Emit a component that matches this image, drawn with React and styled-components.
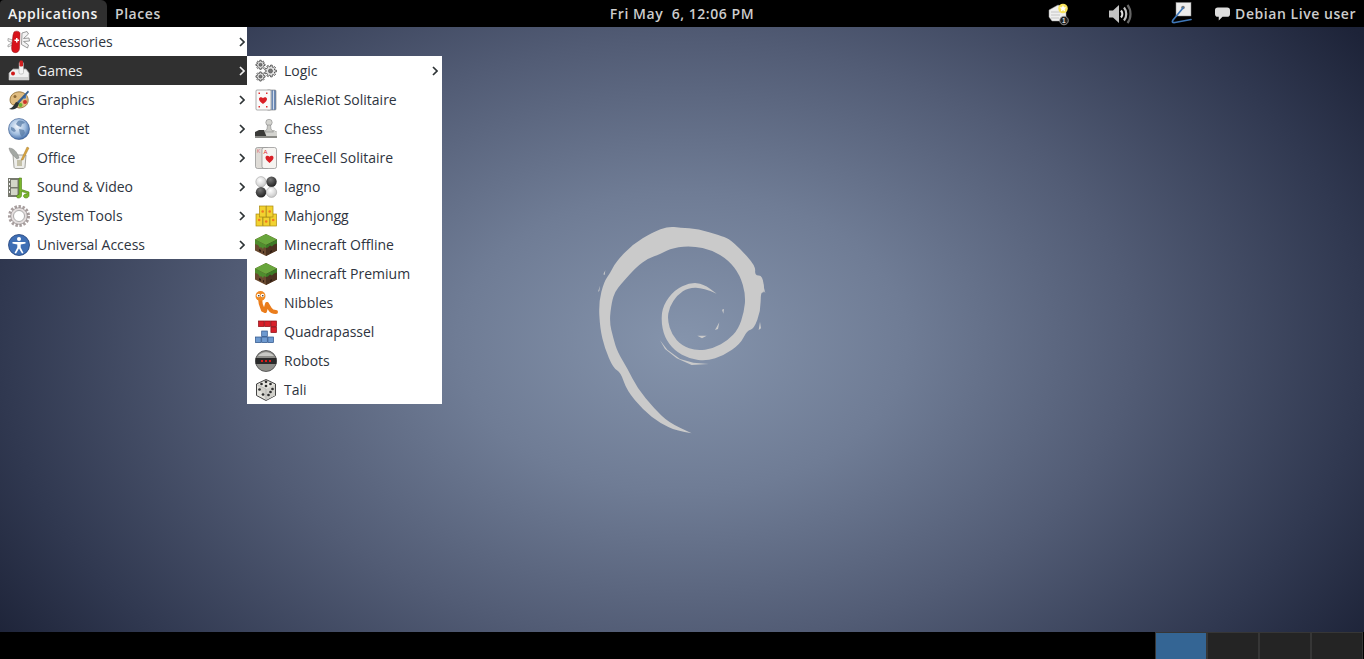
import styled, { createGlobalStyle } from "styled-components"

const GlobalStyle = createGlobalStyle`
  html, body { margin: 0; height: 100%; background: #000; overflow: hidden; }
  #root { height: 100%; }
`

const Icon = ({ children }) => <IconBox viewBox="0 0 22 22">{children}</IconBox>

const gearPoints = (r, teeth) => {
  const pts = []
  const step = (Math.PI * 2) / teeth
  for (let i = 0; i < teeth; i++) {
    const a = i * step
    const corners = [[0.72, -0.32], [1, -0.2], [1, 0.2], [0.72, 0.32]]
    corners.forEach(([k, d]) => {
      const t = a + d * step
      pts.push(`${(Math.cos(t) * r * k).toFixed(2)},${(Math.sin(t) * r * k).toFixed(2)}`)
    })
  }
  return pts.join(" ")
}

const Gear = ({ x, y, r, teeth = 8 }) => (
  <g transform={`translate(${x} ${y})`}>
    <polygon points={gearPoints(r, teeth)} fill="#e2e2e2" stroke="#4e4e4e" strokeWidth="0.9" strokeLinejoin="round" />
    <circle r={r * 0.34} fill="#777" stroke="#444" strokeWidth="0.6" />
  </g>
)

const Cube = () => (
  <Icon>
    <path d="M11 0 22 5.500v11L11 22 0 16.500v-11z" fill="#6a4a30" />
    <path d="M11 11 22 5.500v11L11 22z" fill="#4b3220" />
    <path d="M11 0 22 5.500 11 11 0 5.500z" fill="#68a63c" />
    <path d="M0 5.500 11 11v3l-2-1-1 2-2-2-1 1-2-3-3-1z" fill="#4f8d2e" />
    <path d="M11 11 22 5.500v4l-3 1-2 2-2-1-2 2-2 .5z" fill="#3d7a26" />
    <path d="M4 15l2 1v2l-2-1zM8 17l1 .5v2L8 19zM15 17l2-1v2l-2 1z" fill="#2e1c10" />
  </Icon>
)

const AccessoriesIcon = () => (
  <Icon>
    <path d="M14 2l5-1.500 1.500 2.500-5 4.500 5.500-.5.5 3-6 .5 5 3.500-1 3-6-3.500z" fill="#f4f4f4" stroke="#909090" strokeWidth="0.9" />
    <path d="M4.500 9 0 7.500 0 10l4 1.500M4.500 14 0 16v-2l4-2" fill="#f4f4f4" stroke="#909090" strokeWidth="0.7" />
    <path d="M6 1c2-1.500 6-1 6 1.500l-.5 15c-.3 4-4 5-6.500 3.500-1.400-1-1.600-4-1.200-6.500L5 4z" fill="#d8131b" stroke="#8e0b10" strokeWidth="0.5" />
    <path d="M6.500 8.500h1.500V7h1.500v1.500H11V10H9.500v1.500H8V10H6.500z" fill="#fff" />
  </Icon>
)

const GamesIcon = () => (
  <Icon>
    <path d="M1 13 5 9h13l3 4v7H1z" fill="#f0f0f0" stroke="#a0a0a0" strokeWidth="0.8" />
    <path d="M1 17h20v3H1z" fill="#cfcfcf" />
    <rect x="11" y="2" width="4.500" height="12" rx="1.500" fill="#f5f5f5" stroke="#999" strokeWidth="0.5" />
    <rect x="11.500" y="0.500" width="3.500" height="6" rx="1.200" fill="#cf1f1f" />
    <circle cx="5" cy="13.500" r="2" fill="#d01818" />
  </Icon>
)

const GraphicsIcon = () => (
  <Icon>
    <path d="M2 11C2 5 8 2 13 3c5 1 8 5 7 10-1 4-5 6-9 6-3 0-2-3-5-3-2 0-4-2-4-5z" fill="#e0bc80" stroke="#8c6a30" strokeWidth="0.8" />
    <circle cx="7" cy="7.500" r="1.500" fill="#8d6a36" />
    <circle cx="12.500" cy="16" r="2" fill="#68b52f" />
    <circle cx="17" cy="13" r="2" fill="#d0332b" />
    <circle cx="16.500" cy="8" r="1.700" fill="#3f78c4" />
    <path d="M20 1.500 9 13l2 1.500L21 3z" fill="#38618f" />
    <path d="M9 13c-2 0-2 2-3 3-1 2-3 3-5 4 4 1 8 0 9-3 .6-1.500 1-2.500 1-3z" fill="#2e3436" />
  </Icon>
)

const InternetIcon = () => (
  <Icon>
    <defs>
      <radialGradient id="globe" cx="42%" cy="38%" r="68%">
        <stop offset="0" stopColor="#f2f6fc" />
        <stop offset="0.55" stopColor="#a3bfe0" />
        <stop offset="1" stopColor="#34609f" />
      </radialGradient>
    </defs>
    <circle cx="11" cy="11" r="10.500" fill="url(#globe)" stroke="#34568a" strokeWidth="0.6" />
    <path d="M10 3c3-1 6 0 7 2l-3 1-1 3-3-1-2-2zM11 11l5 1 1 3-3 4-2-3zM3 9l3 1 2 3-2 1-3-2z" fill="#5a7ca6" opacity="0.75" />
  </Icon>
)

const OfficeIcon = () => (
  <Icon>
    <path d="M5 8h13l-1 12c0 1-1 1.500-2 1.500H8c-1 0-2-.5-2-1.500z" fill="#ededea" stroke="#8d8d85" strokeWidth="0.8" />
    <rect x="9" y="13" width="5" height="6" fill="#c4c0a8" />
    <path d="M1 1c4 0 8 3 10 10L9 12C6 9 2 7 1 1z" fill="#a4a8a4" stroke="#777" strokeWidth="0.4" />
    <path d="M19 0l2 1-6 12h-2z" fill="#d9a441" stroke="#99711f" strokeWidth="0.4" />
  </Icon>
)

const SoundIcon = () => (
  <Icon>
    <path d="M0 2h12v19H0z" fill="#77796f" />
    <path d="M3 4h6.500v7H3zM3 12.500h6.500V19H3z" fill="#d3d6c8" />
    <path d="M1 3h1v2H1zM1 7h1v2H1zM1 11h1v2H1zM1 15h1v2H1z" fill="#eee" />
    <path d="M11 2h2.500v11.500l7.500 2.500v3.500c0 1.500-1.500 2.500-3 2.500s-2.500-1-2.500-2 1-2 2.500-2c.4 0 .6 0 1 .1v-1l-5.500-1.600v4c0 1.500-1.500 2.500-3 2.500-1.200 0-2-.7-2-1.500s1-2 2.500-2z" fill="#7ab62c" stroke="#4c7d12" strokeWidth="0.6" />
  </Icon>
)

const SystemIcon = () => (
  <Icon>
    <circle cx="11" cy="11" r="9.500" fill="none" stroke="#a89e9e" strokeWidth="3" strokeDasharray="2.400 1.600" />
    <circle cx="11" cy="11" r="8.300" fill="#e4dede" stroke="#8e8888" strokeWidth="0.7" />
    <circle cx="11" cy="11" r="5.500" fill="#fff" stroke="#999" strokeWidth="0.8" />
  </Icon>
)

const AccessIcon = () => (
  <Icon>
    <circle cx="11" cy="11" r="10.500" fill="#3f6fb5" stroke="#1f3f78" strokeWidth="0.8" />
    <circle cx="11" cy="5" r="2" fill="#fff" />
    <path d="M4.500 8h13v1.500l-4.800 1v3l2.800 5.500-1.500.6L11 14.500 8 19.600 6.500 19l2.800-5.500v-3l-4.800-1z" fill="#fff" />
  </Icon>
)

const LogicIcon = () => (
  <Icon>
    <Gear x={5.500} y={4.800} r={4.600} />
    <Gear x={5.500} y={16.500} r={4.600} />
    <Gear x={15.500} y={11} r={6} teeth={9} />
  </Icon>
)

const Pips = () => (
  <path d="M3.500 3.500h1.500V5H3.500zM11 3.500h1.500V5H11zM3.500 17h1.500v1.500H3.500zM11 17h1.500v1.500H11z" fill="#e03030" />
)

const AisleIcon = () => (
  <Icon>
    <rect x="12" y="1" width="9" height="20" rx="1" fill="#6b89b6" stroke="#777" strokeWidth="0.6" />
    <path d="M16 1.500v19M18.500 1.500v19" stroke="#dde4ee" strokeWidth="0.9" />
    <rect x="1" y="1" width="15" height="20" rx="1" fill="#fafafa" stroke="#8a8a8a" strokeWidth="0.7" />
    <Pips />
    <path d="M8 15C5 12.500 4 11.500 4 10c0-2 3-2.500 4-.7C9 7.500 12 8 12 10c0 1.500-1 2.500-4 5z" fill="#d91f26" />
  </Icon>
)

const ChessIcon = () => (
  <Icon>
    <path d="M0 14 4 12h14l4 2v6H0z" fill="#3a3a38" />
    <path d="M9 12h9l4 2v6H12z" fill="#d4d4d0" />
    <path d="M0 18h22v2H0z" fill="#8a8a86" />
    <circle cx="14" cy="4.500" r="3.200" fill="#d4d4d0" stroke="#888" strokeWidth="0.6" />
    <path d="M12.500 7h3l.5 4 2.500 3h-9l2.500-3z" fill="#c9c9c5" stroke="#888" strokeWidth="0.6" />
  </Icon>
)

const FreeCellIcon = () => (
  <Icon>
    <rect x="0.500" y="0.500" width="13" height="21" rx="2" fill="#dfdcd7" stroke="#8b8b8b" strokeWidth="0.7" />
    <rect x="7" y="0.500" width="14.500" height="21" rx="2" fill="#f6f4f1" stroke="#8b8b8b" strokeWidth="0.7" />
    <text x="1.800" y="6" fontSize="5.500" fontFamily="Liberation Sans" fill="#d77">K</text>
    <text x="8.500" y="6.500" fontSize="6" fontFamily="Liberation Sans" fill="#d22">A</text>
    <path d="M14.500 16c-3-2.500-4-4-4-5.500 0-2 2.800-2.500 4-.7 1.200-1.800 4-1.300 4 .7 0 1.500-1 3-4 5.500z" fill="#d91f26" />
  </Icon>
)

const IagnoIcon = () => (
  <Icon>
    <defs>
      <radialGradient id="white" cx="40%" cy="35%" r="70%">
        <stop offset="0" stopColor="#fff" />
        <stop offset="1" stopColor="#c5c5c5" />
      </radialGradient>
      <radialGradient id="black" cx="40%" cy="30%" r="70%">
        <stop offset="0" stopColor="#777" />
        <stop offset="1" stopColor="#222" />
      </radialGradient>
    </defs>
    <circle cx="6" cy="5.800" r="5.200" fill="url(#white)" stroke="#999" strokeWidth="0.5" />
    <circle cx="16.500" cy="5.800" r="5.200" fill="url(#black)" />
    <circle cx="6" cy="16.200" r="5.200" fill="url(#black)" />
    <circle cx="16.500" cy="16.200" r="5.200" fill="url(#white)" stroke="#999" strokeWidth="0.5" />
  </Icon>
)

const Tile = ({ x, y, h = 9 }) => (
  <g>
    <rect x={x} y={y} width="6.500" height={h} fill="#f2d230" stroke="#a98a10" strokeWidth="0.7" />
    <circle cx={x + 3.200} cy={y + h / 2} r="1.300" fill="#f07a20" />
  </g>
)

const MahjonggIcon = () => (
  <Icon>
    <Tile x={1} y={9} h={12} />
    <Tile x={15} y={9} h={12} />
    <Tile x={8} y={12} />
    <Tile x={4.500} y={1} h={11} />
    <Tile x={11.500} y={1} h={11} />
  </Icon>
)

const NibblesIcon = () => (
  <Icon>
    <path d="M5 6c0 4 1 8 3 12l2 1 2-7 3 5c1 2 3 3 6 3" fill="none" stroke="#ea7d1c" strokeWidth="4" strokeLinecap="round" strokeLinejoin="round" />
    <ellipse cx="5.500" cy="4" rx="5" ry="5" fill="#f08c26" />
    <circle cx="3.500" cy="3.500" r="1.800" fill="#fff" />
    <circle cx="7.500" cy="3.500" r="1.800" fill="#fff" />
    <circle cx="3.800" cy="3.800" r="0.800" fill="#222" />
    <circle cx="7.800" cy="3.800" r="0.800" fill="#222" />
  </Icon>
)

const Block = ({ x, y, fill, line }) => (
  <rect x={x} y={y} width="5.600" height="5.600" fill={fill} stroke={line} strokeWidth="0.7" />
)

const QuadraIcon = () => (
  <Icon>
    {[[3.500, 0], [9.700, 0], [15.900, 0], [15.900, 6]].map(([x, y]) => (
      <Block key={`${x}-${y}`} x={x} y={y} fill="#d8202a" line="#8a0f14" />
    ))}
    {[[6.700, 10], [0.500, 16], [6.700, 16], [12.900, 16]].map(([x, y]) => (
      <Block key={`${x}-${y}`} x={x} y={y} fill="#6e9ad0" line="#2c5288" />
    ))}
  </Icon>
)

const RobotsIcon = () => (
  <Icon>
    <circle cx="11" cy="11" r="10.500" fill="#8e8e8a" stroke="#444" strokeWidth="0.8" />
    <path d="M3 6c4-5 12-5 16 0z" fill="#c9c9c5" />
    <rect x="0.500" y="8" width="21" height="6" fill="#2a2a2a" />
    <path d="M6 11h2M10 11h2M14 11h2" stroke="#e01818" strokeWidth="2" />
  </Icon>
)

const TaliIcon = () => (
  <Icon>
    <path d="M11 0.500 20.500 5v11.500L11 21.500 1.500 16.500V5z" fill="#e6e5df" stroke="#444" strokeWidth="1" strokeLinejoin="round" />
    <path d="M2 5.500 11 10l9-4.500V16.500L11 21z" fill="#d2d1cb" />
    <path d="M2 5.500 11 10v11" fill="none" stroke="#aaa" strokeWidth="0.6" />
    {[[11, 2.800], [6.500, 5], [15.500, 5], [11, 7], [4.500, 10.500], [8, 15.500], [17.500, 10], [15.500, 13], [13.500, 16]].map(([x, y]) => (
      <circle key={`${x}-${y}`} cx={x} cy={y} r="1.350" fill="#2e2e2e" />
    ))}
  </Icon>
)

const Chevron = ({ light }) => (
  <ArrowBox viewBox="0 0 6 10">
    <path d="M1 1l4 4-4 4" fill="none" stroke={light ? "#eee" : "#2e3436"} strokeWidth="1.700" />
  </ArrowBox>
)

const mainItems = [
  ["Accessories", AccessoriesIcon],
  ["Games", GamesIcon, true],
  ["Graphics", GraphicsIcon],
  ["Internet", InternetIcon],
  ["Office", OfficeIcon],
  ["Sound & Video", SoundIcon],
  ["System Tools", SystemIcon],
  ["Universal Access", AccessIcon],
]

const gameItems = [
  ["Logic", LogicIcon, true],
  ["AisleRiot Solitaire", AisleIcon],
  ["Chess", ChessIcon],
  ["FreeCell Solitaire", FreeCellIcon],
  ["Iagno", IagnoIcon],
  ["Mahjongg", MahjonggIcon],
  ["Minecraft Offline", Cube],
  ["Minecraft Premium", Cube],
  ["Nibbles", NibblesIcon],
  ["Quadrapassel", QuadraIcon],
  ["Robots", RobotsIcon],
  ["Tali", TaliIcon],
]

// curve through the midpoints, so the two ends of the stroke stay sharp
const curve = (pts) => {
  let d = ""
  for (let i = 1; i < pts.length - 1; i++) {
    const [x, y] = pts[i]
    const [nx, ny] = pts[i + 1]
    d += `Q${x} ${y} ${(x + nx) / 2} ${(y + ny) / 2}`
  }
  return d + `L${pts[pts.length - 1].join(" ")}`
}

const outerEdge = [[335, 655], [290, 648], [240, 624], [190, 586], [140, 526], [122, 472], [100, 460], [74, 400], [60, 340], [56, 262], [72, 200], [90, 175], [108, 140], [158, 88], [218, 52], [265, 34], [300, 38], [355, 42], [420, 62], [445, 70], [482, 103], [527, 153], [524, 182], [548, 181], [554, 235], [542, 230], [542, 287], [522, 342], [501, 347], [481, 387], [431, 422], [380, 438], [329, 432], [283, 407], [253, 366], [243, 315], [250, 269], [284, 224], [330, 203], [370, 206], [410, 236]]
const innerEdge = [[410, 236], [370, 219], [325, 218], [292, 240], [268, 276], [262, 315], [276, 360], [305, 392], [350, 408], [400, 400], [445, 375], [475, 342], [492, 292], [497, 240], [480, 180], [445, 135], [395, 105], [340, 93], [280, 97], [240, 118], [205, 130], [170, 155], [125, 205], [105, 230], [95, 262], [88, 320], [100, 370], [112, 410], [142, 460], [172, 520], [222, 580], [265, 622], [335, 655]]

const Swirl = () => (
  <Logo viewBox="0 0 612 690">
    <g fill="#cacaca">
      <path d={`M335 655${curve(outerEdge)}${curve(innerEdge)}Z`} />
      <path d="M70 178 76 166 74 180zM54 230 60 212 58 228zM430 296 426 284 432 282zM405 345 418 322 414 342zM352 362 380 362 366 370zM240 376 262 404 300 432 340 443 386 447 335 450 290 430 255 402zM545 190 556 235 548 222zM540 320 543 340 536 345z" />
    </g>
  </Logo>
)

const TrayNote = () => (
  <TrayIcon viewBox="0 0 22 22">
    <path d="M1 7 10 2l8 3v13H4L1 14z" fill="#efefef" stroke="#999" strokeWidth="0.5" />
    <path d="M3 9h9M3 12h9M3 15h8" stroke="#bbb" strokeWidth="0.8" />
    <circle cx="15" cy="5.500" r="4.800" fill="#f6e25a" />
    <path d="M15 2l1 2.300 2.500.2-1.900 1.600.6 2.400-2.200-1.300-2.200 1.300.6-2.400-1.900-1.600 2.500-.2z" fill="#fff" />
    <circle cx="16" cy="17.500" r="4.300" fill="#222" stroke="#aaa" strokeWidth="0.8" />
    <text x="16" y="20" textAnchor="middle" fontSize="6.500" fontFamily="Liberation Sans" fill="#ddd">1</text>
  </TrayIcon>
)

const TraySpeaker = () => (
  <TrayIcon viewBox="0 0 22 22">
    <path d="M0 7.500h4L10 2v18l-6-5.500H0z" fill="#c4c4c4" />
    <path d="M12 7.500c1.700 2 1.700 5 0 7" fill="none" stroke="#e0e0e0" strokeWidth="2.200" />
    <path d="M15 4.500c3 3.500 3 9.500 0 13" fill="none" stroke="#c0c0c0" strokeWidth="2.200" />
    <path d="M18.500 2c4 5 4 13 0 18" fill="none" stroke="#666" strokeWidth="2.200" />
  </TrayIcon>
)

const TrayPen = () => (
  <TrayIcon viewBox="0 0 22 22">
    <rect x="6" y="-0.500" width="15" height="13.500" fill="#ececec" stroke="#888" strokeWidth="0.5" />
    <circle cx="13" cy="4.500" r="1.800" fill="#777" />
    <path d="M13 5 3 17Q1 20 5 19.500L21 16.500" fill="none" stroke="#3f77b8" strokeWidth="1.700" strokeLinejoin="round" strokeLinecap="round" />
  </TrayIcon>
)

export default function App()
{
  return (
    <Wrapper>
      <GlobalStyle />
      <TopBar>
        <Left>
          <AppsTab>Applications</AppsTab>
          <PanelLabel>Places</PanelLabel>
        </Left>
        <Clock>Fri May&nbsp; 6, 12:06 PM</Clock>
        <Tray>
          <TraySlot><TrayNote /></TraySlot>
          <TraySlot><TraySpeaker /></TraySlot>
          <TraySlot><TrayPen /></TraySlot>
          <UserBox>
            <BubbleIcon viewBox="0 0 16 14">
              <path d="M3 0h10c2 0 3 1 3 3v4c0 2-1 3-3 3H8l-4 4v-4H3c-2 0-3-1-3-3V3c0-2 1-3 3-3z" fill="#ddd" />
            </BubbleIcon>
            Debian Live user
          </UserBox>
        </Tray>
      </TopBar>

      <Desktop>
        <Swirl />
        <MenuLayer>
          <Menu>
            {mainItems.map(([label, ItemIcon, active]) => (
              <Item key={label} $active={active}>
                <ItemIcon />
                <span>{label}</span>
                <Chevron light={active} />
              </Item>
            ))}
          </Menu>
          <SubMenu>
            {gameItems.map(([label, ItemIcon, arrow]) => (
              <Item key={label} $inset>
                <ItemIcon />
                <span>{label}</span>
                {arrow && <Chevron />}
              </Item>
            ))}
          </SubMenu>
        </MenuLayer>
      </Desktop>

      <BottomBar>
        {[true, false, false, false].map((on, i) => (
          <Workspace key={i} $on={on} />
        ))}
      </BottomBar>
    </Wrapper>
  )
}

const Wrapper = styled.div`
  height: 100%;
  display: flex;
  flex-direction: column;
  font-family: "Open Sans", "Noto Sans", sans-serif;
  font-size: 14px;
`
const TopBar = styled.div`
  height: 27px;
  flex-shrink: 0;
  background: #000;
  color: #ddd;
  display: grid;
  grid-template-columns: 1fr auto 1fr;
  align-items: stretch;
  font-weight: 600;
  letter-spacing: 0.55px;
`
const Left = styled.div`
  display: flex;
  align-items: stretch;
`
const AppsTab = styled.div`
  width: 107px;
  box-sizing: border-box;
  padding-left: 8px;
  display: flex;
  align-items: center;
  background: #2f2f2f;
  color: #f4f4f4;
  border-radius: 4px 6px 0 0;
`
const PanelLabel = styled.div`
  padding-left: 8px;
  display: flex;
  align-items: center;
  color: #ccc;
`
const Clock = styled.div`
  display: flex;
  align-items: center;
  color: #ccc;
`
const Tray = styled.div`
  display: flex;
  justify-content: flex-end;
  align-items: center;
  padding-right: 8px;
`
const TraySlot = styled.div`
  display: flex;
  margin-right: 39px;

  &:nth-child(3) {
    margin-right: 23px;
  }
`
const TrayIcon = styled.svg`
  width: 22px;
  height: 22px;
  display: block;
  overflow: visible;
`
const UserBox = styled.div`
  display: flex;
  align-items: center;
  gap: 5px;
  color: #ccc;
`
const BubbleIcon = styled.svg`
  width: 15px;
  height: 14px;
`
const Desktop = styled.div`
  flex: 1;
  position: relative;
  display: flex;
  align-items: center;
  justify-content: center;
  background: radial-gradient(ellipse 900px 600px at 50% 52%, #8594ac 0%, #6f7c95 25%, #525c75 50%, #303850 76%, #1d2338 91%, #1a2035 100%);
`
const Logo = styled.svg`
  width: 204px;
  height: 230px;
`
const MenuLayer = styled.div`
  position: absolute;
  top: 0;
  left: 0;
  display: flex;
  align-items: flex-start;
`
const Menu = styled.div`
  width: 247px;
  background: #fff;
  color: #2e3436;
`
const SubMenu = styled(Menu)`
  width: 195px;
  margin-top: 29px;
`
const Item = styled.div`
  height: 29px;
  box-sizing: border-box;
  padding: 0 ${(p) => (p.$inset ? "4px" : "2px")} 0 8px;
  display: flex;
  align-items: center;
  gap: 7px;
  background: ${(p) => (p.$active ? "#303030" : "transparent")};
  color: ${(p) => (p.$active ? "#eeeeee" : "#2e3440")};

  span {
    flex: 1;
  }
`
const IconBox = styled.svg`
  width: 22px;
  height: 22px;
  flex-shrink: 0;
  overflow: visible;
`
const ArrowBox = styled.svg`
  width: 6px;
  height: 10px;
  flex-shrink: 0;
`
const BottomBar = styled.div`
  height: 27px;
  flex-shrink: 0;
  background: #000;
  display: flex;
  justify-content: flex-end;
  padding-right: 1px;
`
const Workspace = styled.div`
  width: 52px;
  box-sizing: border-box;
  background: ${(p) => (p.$on ? "#346594" : "#242424")};
  border: 1px solid #363636;
  border-bottom: none;
`
